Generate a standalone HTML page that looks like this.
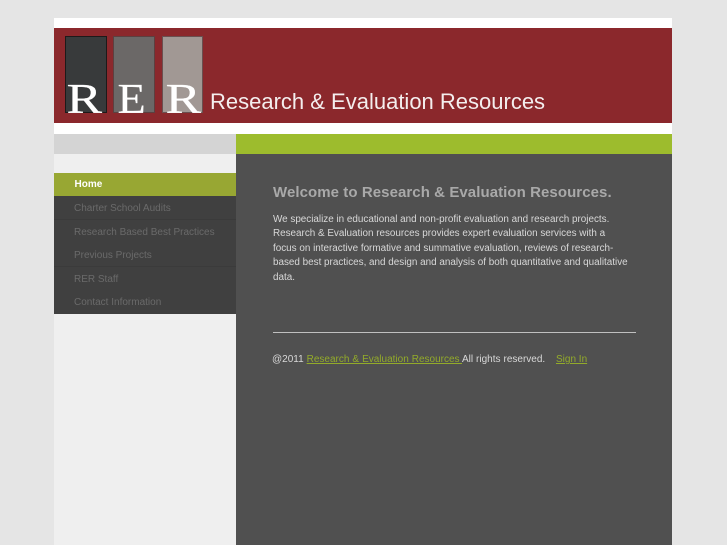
<!DOCTYPE html>
<html>
<head>
<meta charset="utf-8">
<style>
html,body{margin:0;padding:0}
body{width:727px;height:545px;overflow:hidden;background:#e5e5e5;position:relative;font-family:"Liberation Sans",sans-serif}
.a{position:absolute}
.t{position:absolute;white-space:nowrap}
.m{position:absolute;left:54px;width:182px;height:24px;background:#404040;border-bottom:1px solid #3b3b3b;box-sizing:border-box}
.m span{position:absolute;left:20px;top:6px;font-size:10px;line-height:14px;color:#6a6a6a;white-space:nowrap}
.b{position:absolute;top:36px;height:77px;box-sizing:border-box}
.p{position:absolute;left:273px;font-size:9.9px;line-height:14px;color:#d8d8d8;white-space:nowrap}
a{color:#93ab2a;text-decoration:underline}
svg{position:absolute;left:0;top:0}
</style>
</head>
<body>
<div class="a" style="left:54px;top:18px;width:618px;height:527px;background:#efefef"></div>
<div class="a" style="left:54px;top:18px;width:618px;height:116px;background:#fff"></div>
<div class="a" style="left:54px;top:28px;width:618px;height:95px;background:#8b282c"></div>
<div class="b" style="left:65px;width:42px;background:#383a3b;border:1px solid #1d1a1a"></div>
<div class="b" style="left:113px;width:42px;background:#6b6867;border:1px solid #5c4040"></div>
<div class="b" style="left:162px;width:41px;background:#a19894;border:1px solid #6a5050"></div>
<svg width="727" height="545" style="font-family:'Liberation Serif',serif;font-size:42px" fill="#fff" stroke="#fff" stroke-width=".15">
<text transform="translate(66.5,113) scale(1.27,1)">R</text>
<text transform="translate(117.5,113) scale(1.1,1)">E</text>
<text transform="translate(165.5,113) scale(1.27,1)">R</text>
</svg>
<div class="t" style="left:210px;top:90px;font-size:22px;line-height:24px;color:#f4eeee">Research &amp; Evaluation Resources</div>
<div class="a" style="left:54px;top:134px;width:182px;height:20px;background:#d4d4d4"></div>
<div class="a" style="left:236px;top:134px;width:436px;height:20px;background:#9dbc2d"></div>
<div class="a" style="left:236px;top:154px;width:436px;height:391px;background:#505050"></div>
<div class="a" style="left:54px;top:173px;width:182px;height:23px;background:#98a733"></div>
<div class="t" style="left:74.5px;top:178px;font-size:10px;line-height:14px;font-weight:bold;color:#fff">Home</div>
<div class="m" style="top:196px"><span>Charter School Audits</span></div>
<div class="m" style="top:219.5px"><span>Research Based Best Practices</span></div>
<div class="m" style="top:243px"><span>Previous Projects</span></div>
<div class="m" style="top:267px"><span>RER Staff</span></div>
<div class="m" style="top:290px;height:24px;border-bottom:0"><span>Contact Information</span></div>
<div class="t" style="left:273px;top:184px;font-size:15px;line-height:18px;font-weight:bold;color:#a9a9a9;letter-spacing:.07px">Welcome to Research &amp; Evaluation Resources.</div>
<div class="p" style="top:213px">We specialize in educational and non-profit evaluation and research projects.</div>
<div class="p" style="top:227px">Research &amp; Evaluation resources provides expert evaluation services with a</div>
<div class="p" style="top:242px">focus on interactive formative and summative evaluation, reviews of research-</div>
<div class="p" style="top:256px">based best practices, and design and analysis of both quantitative and qualitative</div>
<div class="p" style="top:271px">data.</div>
<div class="a" style="left:273px;top:332px;width:363px;height:1px;background:#c0c0c0"></div>
<div class="p" style="top:353px;left:272px;font-size:10px;word-spacing:.2px">@2011 <a href="#">Research &amp; Evaluation Resources </a> All rights reserved.</div>
<div class="p" style="top:353px;left:556px;font-size:10px"><a href="#">Sign In</a></div>
</body>
</html>
